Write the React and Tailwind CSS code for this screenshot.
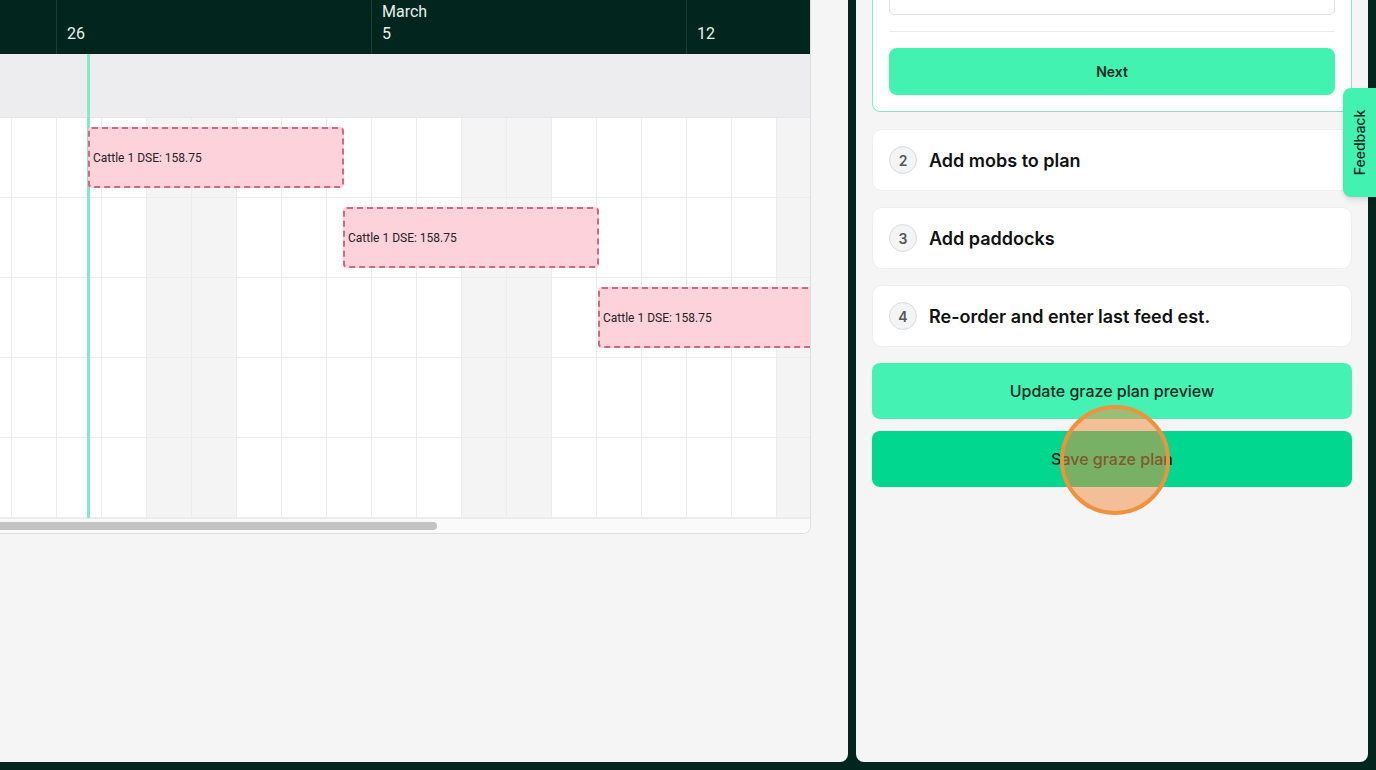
import React from "react";

const weeks = [
  { month: "", day: "" },
  { month: "", day: "26" },
  { month: "March", day: "5" },
  { month: "", day: "12" },
];

// day columns start 33px left of the visible area, 45px per day
const days = Array.from({ length: 19 }, (_, i) => i - 1);
const isWeekend = (i) => ((i % 7) + 7) % 7 === 3 || ((i % 7) + 7) % 7 === 4;

const bars = [
  { row: 0, left: 88 },
  { row: 1, left: 343 },
  { row: 2, left: 598 },
];

const steps = [
  { n: 2, title: "Add mobs to plan" },
  { n: 3, title: "Add paddocks" },
  { n: 4, title: "Re-order and enter last feed est." },
];

function Chart() {
  return (
    <div className="w-[811px] overflow-hidden rounded-br-lg border-r border-b border-[#dedede] bg-white font-['Roboto',sans-serif]">
      {/* header */}
      <div className="flex h-[54px] bg-[#02261d] text-[16px] leading-[20px] text-[#e9f0ed]">
        <div className="ml-[-258px] flex">
          {weeks.map((w, i) => (
            <div key={i} className="w-[315px] shrink-0 border-r border-[#163f33] pl-[10px] pt-[2px]">
              <div className="h-[22px]">{w.month}</div>
              <div className="h-[20px]">{w.day}</div>
            </div>
          ))}
        </div>
      </div>

      <div className="relative">
        <div className="h-[64px] border-b border-[#e6e6ea] bg-[#ededf0]" />
        <div className="relative h-[400px]">
          <div className="absolute inset-y-0 left-[-33px] flex">
            {days.map((d) => (
              <div
                key={d}
                className={`h-full w-[45px] shrink-0 border-r border-[#ececec] ${isWeekend(d) ? "bg-[#f4f4f4]" : "bg-white"}`}
              />
            ))}
          </div>
          <div className="relative">
            {[0, 1, 2, 3, 4].map((r) => (
              <div key={r} className="relative h-[80px] border-b border-[#ececec]">
                {bars
                  .filter((b) => b.row === r)
                  .map((b) => (
                    <div
                      key={b.left}
                      style={{ left: b.left }}
                      className="absolute top-[9px] z-10 flex h-[61px] w-[256px] items-center rounded-[4px] border-2 border-dashed border-[#cf6a84] bg-[#fdd2db] pl-[3px] text-[12px] text-[#222]"
                    >
                      Cattle 1 DSE: 158.75
                    </div>
                  ))}
              </div>
            ))}
          </div>
        </div>
        <div className="absolute inset-y-0 left-[87px] w-[3px] bg-[#7eecc4]" />
      </div>

      {/* horizontal scrollbar */}
      <div className="h-[15px] border-t border-[#ececec] bg-[#fafafa] pt-[3px]">
        <div className="h-[8px] w-[437px] rounded-r-full bg-[#c3c3c3]" />
      </div>
    </div>
  );
}

function SidePanel() {
  return (
    <div className="flex flex-1 flex-col overflow-hidden rounded-b-lg bg-[#f5f5f5] px-4 font-['Inter',sans-serif]">
      <div className="mt-[-42px] rounded-lg border border-[#8ae6c4] bg-white p-4">
        <div className="h-[40px] rounded-md border border-[#e3e3e3] bg-white" />
        <div className="my-4 h-px bg-[#ebebeb]" />
        <button className="flex h-[47px] w-full items-center justify-center rounded-lg bg-[#42f2b1] text-[14px] font-semibold text-[#0c2a20]">
          Next
        </button>
      </div>

      <div className="mt-[17px] flex flex-col gap-4">
        {steps.map((s) => (
          <div
            key={s.n}
            className="flex h-[62px] items-center gap-3 rounded-[10px] border border-[#efefef] bg-white px-4"
          >
            <div className="flex h-[28px] w-[28px] items-center justify-center rounded-full border border-[#dcdcdc] bg-[#f3f4f6] text-[14px] font-semibold text-[#555]">
              {s.n}
            </div>
            <div className="text-[18px] font-semibold text-[#111]">{s.title}</div>
          </div>
        ))}
      </div>

      <button className="mt-4 flex h-[56px] w-full items-center justify-center rounded-lg bg-[#44f2b3] text-[16px] font-medium text-[#0c2a20]">
        Update graze plan preview
      </button>
      <button className="mt-3 flex h-[56px] w-full items-center justify-center rounded-lg bg-[#01d78f] text-[16px] font-medium text-[#0c2a20]">
        Save graze plan
      </button>
    </div>
  );
}

export default function App() {
  return (
    <div className="relative flex h-[770px] w-[1376px] gap-2 overflow-hidden bg-[#02261d] pr-2 pb-2">
      <div className="w-[848px] shrink-0 rounded-br-lg bg-[#f5f5f5]">
        <Chart />
      </div>
      <SidePanel />

      {/* feedback tab */}
      <div className="absolute top-[88px] right-0 flex h-[109px] w-[33px] items-center justify-center rounded-l-lg bg-[#42f2b1] shadow-md">
        <span className="-rotate-90 whitespace-nowrap font-['Inter',sans-serif] text-[14px] font-medium text-[#0c2a20]">
          Feedback
        </span>
      </div>

      {/* click marker */}
      <div className="pointer-events-none absolute top-[405px] left-[1060px] h-[110px] w-[110px] rounded-full border-[4px] border-[#f0913c] bg-[#f08a3c]/50" />
    </div>
  );
}
